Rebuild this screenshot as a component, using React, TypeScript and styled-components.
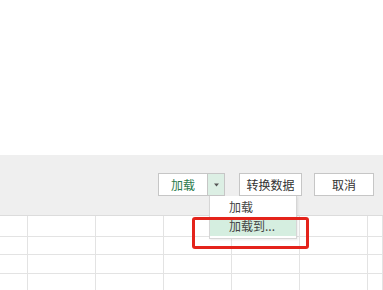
import React from "react";
import styled, { createGlobalStyle } from "styled-components";

const Global = createGlobalStyle`
  html, body { margin: 0; padding: 0; background: #fff; }
  body { font-family: "Noto Sans CJK SC", "Microsoft YaHei", sans-serif; }
`;

const Page = styled.div`
  position: relative;
  width: 383px;
  height: 290px;
  overflow: hidden;
  display: flex;
  flex-direction: column;
  background: #fff;
`;

const TopArea = styled.div`
  height: 155px;
  flex: none;
  background: #fff;
`;

const Footer = styled.div`
  flex: none;
  height: 61px;
  background: #efefef;
  border-bottom: 1px solid #dcdcdc;
  display: flex;
  justify-content: flex-end;
  align-items: flex-start;
  padding: 18px 9px 0 0;
  box-sizing: border-box;
`;

const Split = styled.div`
  position: relative;
  display: flex;
  height: 23px;
  margin-right: 14px;
`;

const Btn = styled.button<{ $w: number; $green?: boolean }>`
  width: ${(p) => p.$w}px;
  height: 23px;
  box-sizing: border-box;
  border: 1px solid #c6c6c6;
  background: #fff;
  color: ${(p) => (p.$green ? "#2a7a4b" : "#333")};
  font-family: inherit;
  font-size: 12px;
  line-height: 21px;
  padding: 0;
  margin: 0;
  display: flex;
  align-items: center;
  justify-content: center;
`;

const ArrowBtn = styled.button`
  width: 17px;
  height: 23px;
  box-sizing: border-box;
  border: 1px solid #c6c6c6;
  border-left: none;
  background: #dcefe4;
  padding: 0;
  display: flex;
  align-items: center;
  justify-content: center;
`;

const Gap = styled.div<{ $w: number }>`
  width: ${(p) => p.$w}px;
`;

const Menu = styled.div`
  position: absolute;
  left: 51px;
  top: 23px;
  width: 88px;
  background: #fff;
  border: 1px solid #d6d6d6;
  border-top: none;
  box-shadow: 1px 1px 2px rgba(0, 0, 0, 0.08);
  box-sizing: border-box;
  z-index: 2;
`;

const MenuItem = styled.div<{ $active?: boolean }>`
  height: ${(p) => (p.$active ? 18 : 22)}px;
  margin-bottom: ${(p) => (p.$active ? 2 : 0)}px;
  padding-left: 19px;
  font-size: 12px;
  line-height: ${(p) => (p.$active ? 16 : 22)}px;
  color: #444;
  background: ${(p) => (p.$active ? "#d5eee0" : "#fff")};
  white-space: nowrap;
`;

const Grid = styled.div`
  flex: none;
  display: grid;
  grid-template-columns: 28px repeat(5, 68px) 1fr;
  grid-template-rows: 21px 18px 19px 19px;
`;

const Cell = styled.div`
  border-right: 1px solid #e3e3e3;
  border-bottom: 1px solid #e3e3e3;
`;

const Highlight = styled.div`
  position: absolute;
  left: 192px;
  top: 217px;
  width: 117px;
  height: 32px;
  border: 3px solid #e4231b;
  border-radius: 3px;
  box-sizing: border-box;
  z-index: 3;
`;

export default function App() {
  const cells = Array.from({ length: 28 });
  return (
    <>
      <Global />
      <Page>
        <TopArea />
        <Footer>
          <Split>
            <Btn $w={50} $green>加载</Btn>
            <ArrowBtn>
              <svg width="7" height="4" viewBox="0 0 7 4">
                <path d="M1 0.5 L6 0.5 L3.5 3.5 Z" fill="#555" />
              </svg>
            </ArrowBtn>
            <Menu>
              <MenuItem>加载</MenuItem>
              <MenuItem $active>加载到...</MenuItem>
            </Menu>
          </Split>
          <Btn $w={63}>转换数据</Btn>
          <Gap $w={12} />
          <Btn $w={60}>取消</Btn>
        </Footer>
        <Grid>
          {cells.map((_, i) => (
            <Cell key={i} />
          ))}
        </Grid>
        <Highlight />
      </Page>
    </>
  );
}
